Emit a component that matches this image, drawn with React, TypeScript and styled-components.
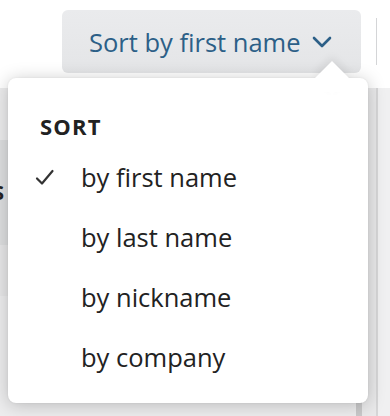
import styled, { createGlobalStyle } from 'styled-components';

const GlobalStyle = createGlobalStyle`
  html, body {
    margin: 0;
    padding: 0;
    background: #ffffff;
  }
  body {
    font-family: 'Open Sans', 'Liberation Sans', sans-serif;
  }
`;

const Page = styled.div`
  position: relative;
  width: 390px;
  height: 416px;
  overflow: hidden;
  background: #ffffff;
  display: flex;
  flex-direction: column;
`;

const Header = styled.div`
  height: 88px;
  flex-shrink: 0;
  display: flex;
  align-items: flex-start;
  justify-content: flex-end;
  padding: 10px 0 0 0;
  box-sizing: border-box;
`;

const SortButton = styled.button`
  height: 63px;
  width: 299px;
  border: none;
  border-radius: 6px;
  background: linear-gradient(#eaebed, #e4e5e7);
  color: #2c5f87;
  font-family: inherit;
  font-size: 25.5px;
  display: flex;
  align-items: center;
  gap: 11px;
  padding: 0 0 0 27px;
  box-sizing: border-box;
  cursor: pointer;
  white-space: nowrap;
`;

const HeaderDivider = styled.div`
  width: 1px;
  height: 47px;
  margin: 8px 13px 0 15px;
  background: #d4d5d7;
`;

const Body = styled.div`
  flex: 1;
  display: flex;
`;

const List = styled.div`
  flex: 1;
  display: flex;
  flex-direction: column;
  background: #eeeeef;
`;

const ListRow = styled.div<{ $tone: string; $h: number }>`
  height: ${(p) => p.$h}px;
  background: ${(p) => p.$tone};
  display: flex;
  align-items: center;
  font-weight: 700;
  font-size: 20px;
  color: #222;
`;

const RowLetter = styled.span`
  margin-left: -7px;
`;

const Scroll = styled.div`
  width: 6px;
  background: #c9c9ca;
`;

const Gutter = styled.div`
  width: 14px;
  background: #e9e9ea;
  border-right: 2px solid #d6d6d7;
`;

const SidePane = styled.div`
  width: 12px;
  background: #f0f0f1;
`;

const Popover = styled.div`
  position: absolute;
  top: 78px;
  left: 8px;
  width: 360px;
  height: 325px;
  background: #ffffff;
  border-radius: 8px;
  box-shadow: 0 2px 18px rgba(0, 0, 0, 0.22), 0 0 2px rgba(0, 0, 0, 0.08);
  box-sizing: border-box;
  padding: 33px 0 0 32px;
`;

const Arrow = styled.div`
  position: absolute;
  top: -12px;
  right: 24px;
  width: 24px;
  height: 24px;
  background: #ffffff;
  transform: rotate(45deg);
  box-shadow: -3px -3px 8px rgba(0, 0, 0, 0.08);
`;

const ArrowCover = styled.div`
  position: absolute;
  top: 0;
  right: 10px;
  width: 50px;
  height: 14px;
  background: #ffffff;
`;

const SectionTitle = styled.div`
  font-weight: 700;
  font-size: 22px;
  letter-spacing: 1.2px;
  color: #222222;
  margin-bottom: 6px;
`;

const MenuItem = styled.div`
  position: relative;
  height: 60px;
  display: flex;
  align-items: center;
  font-size: 25.5px;
  color: #222222;
  padding-left: 41px;
  white-space: nowrap;
`;

const Check = styled.svg`
  position: absolute;
  left: -5px;
  top: 50%;
  margin-top: -9px;
`;

function Chevron() {
  return (
    <svg width="20" height="12" viewBox="0 0 20 12">
      <path d="M2 2 L10 10 L18 2" fill="none" stroke="#2c5f87" strokeWidth="2.6" strokeLinecap="round" strokeLinejoin="round" />
    </svg>
  );
}

const items = ['by first name', 'by last name', 'by nickname', 'by company'];

export default function App() {
  return (
    <>
      <GlobalStyle />
      <Page>
        <Header>
          <SortButton>
            Sort by first name
            <Chevron />
          </SortButton>
          <HeaderDivider />
        </Header>
        <Body>
          <List>
            <ListRow $tone="#ececed" $h={52} />
            <ListRow $tone="#dedfe0" $h={105}>
              <RowLetter>S</RowLetter>
            </ListRow>
            <ListRow $tone="#e7e7e8" $h={51} />
            <ListRow $tone="#ededee" $h={120} />
          </List>
          <Scroll />
          <Gutter />
          <SidePane />
        </Body>
        <Popover>
          <Arrow />
          <ArrowCover />
          <SectionTitle>SORT</SectionTitle>
          {items.map((label, i) => (
            <MenuItem key={label}>
              {i === 0 && (
                <Check width="20" height="20" viewBox="0 0 20 20">
                  <path d="M2 10.5 L7 15.5 L17.5 3" fill="none" stroke="#333" strokeWidth="2.2" strokeLinecap="round" strokeLinejoin="round" />
                </Check>
              )}
              {label}
            </MenuItem>
          ))}
        </Popover>
      </Page>
    </>
  );
}
